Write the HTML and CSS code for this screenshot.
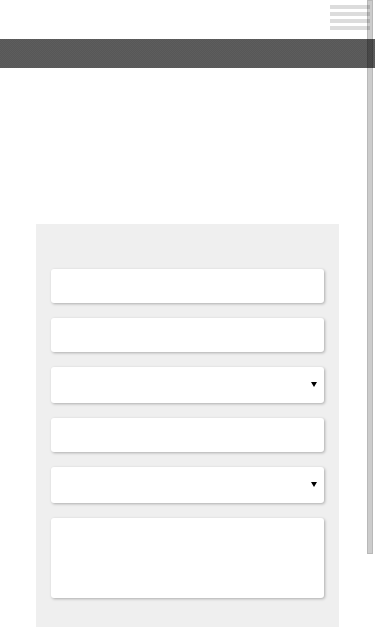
FILE: index.html
```html
<!DOCTYPE html>
<html lang="en">
<head>
<meta charset="utf-8">
<meta name="viewport" content="width=device-width, initial-scale=1">
<title>Form</title>
<link rel="stylesheet" href="styles.css">
</head>
<body>
<header class="top">
  <button class="menu" type="button" aria-label="Menu">
    <span class="menu-line"></span>
    <span class="menu-line"></span>
    <span class="menu-line"></span>
    <span class="menu-line"></span>
  </button>
</header>
<div class="band"></div>
<main class="main">
  <form class="panel">
    <input class="field" type="text" aria-label="Field 1">
    <input class="field" type="text" aria-label="Field 2">
    <div class="select-wrap">
      <select class="field field-select" aria-label="Select 1"><option></option></select>
      <svg class="arrow" width="6" height="5" viewBox="0 0 6 5"><path d="M0 0H6L3 5Z" fill="#000"/></svg>
    </div>
    <input class="field" type="text" aria-label="Field 3">
    <div class="select-wrap">
      <select class="field field-select" aria-label="Select 2"><option></option></select>
      <svg class="arrow" width="6" height="5" viewBox="0 0 6 5"><path d="M0 0H6L3 5Z" fill="#000"/></svg>
    </div>
    <textarea class="field field-area" aria-label="Message"></textarea>
  </form>
</main>
<div class="scroll-thumb"></div>
</body>
</html>
```
FILE: styles.css
```css
html, body {
  margin: 0;
  padding: 0;
  background: #ffffff;
  font-family: "Liberation Sans", Arial, sans-serif;
  overflow: hidden;
}

.top {
  height: 39px;
  display: flex;
  justify-content: flex-end;
  align-items: flex-start;
}

.menu {
  margin: 5px 5px 0 0;
  padding: 0;
  border: 0;
  background: transparent;
  width: 40px;
  display: flex;
  flex-direction: column;
  gap: 3px;
}

.menu-line {
  display: block;
  height: 4px;
  width: 40px;
  background: #dcdcdc;
}

.band {
  height: 29px;
  background-color: #5a5a5a;
  background-image: repeating-conic-gradient(#5d5d5d 0 25%, #575757 0 50%);
  background-size: 2px 2px;
}

.main {
  padding: 156px 0 0 36px;
}

.panel {
  width: 273px;
  padding: 45px 15px 29px;
  background: #efefef;
  display: flex;
  flex-direction: column;
  gap: 15px;
  margin: 0;
}

.field {
  display: block;
  box-sizing: border-box;
  width: 273px;
  height: 34px;
  margin: 0;
  border: 0;
  border-radius: 3px;
  background: #ffffff;
  box-shadow: 1px 1px 3px rgba(0, 0, 0, 0.28);
  font-family: "Liberation Sans", Arial, sans-serif;
  font-size: 14px;
  padding: 0 10px;
  outline: none;
}

.field-select {
  height: 36px;
  -webkit-appearance: none;
  appearance: none;
  color: #000;
}

.field-area {
  height: 80px;
  resize: none;
  padding: 8px 10px;
}

.select-wrap {
  position: relative;
}

.arrow {
  position: absolute;
  right: 7px;
  top: 15px;
  pointer-events: none;
}

.scroll-thumb {
  position: fixed;
  top: 0;
  right: 2px;
  width: 6px;
  height: 554px;
  box-sizing: border-box;
  background: rgba(0, 0, 0, 0.2);
  border: 1px solid rgba(0, 0, 0, 0.1);
}
```
